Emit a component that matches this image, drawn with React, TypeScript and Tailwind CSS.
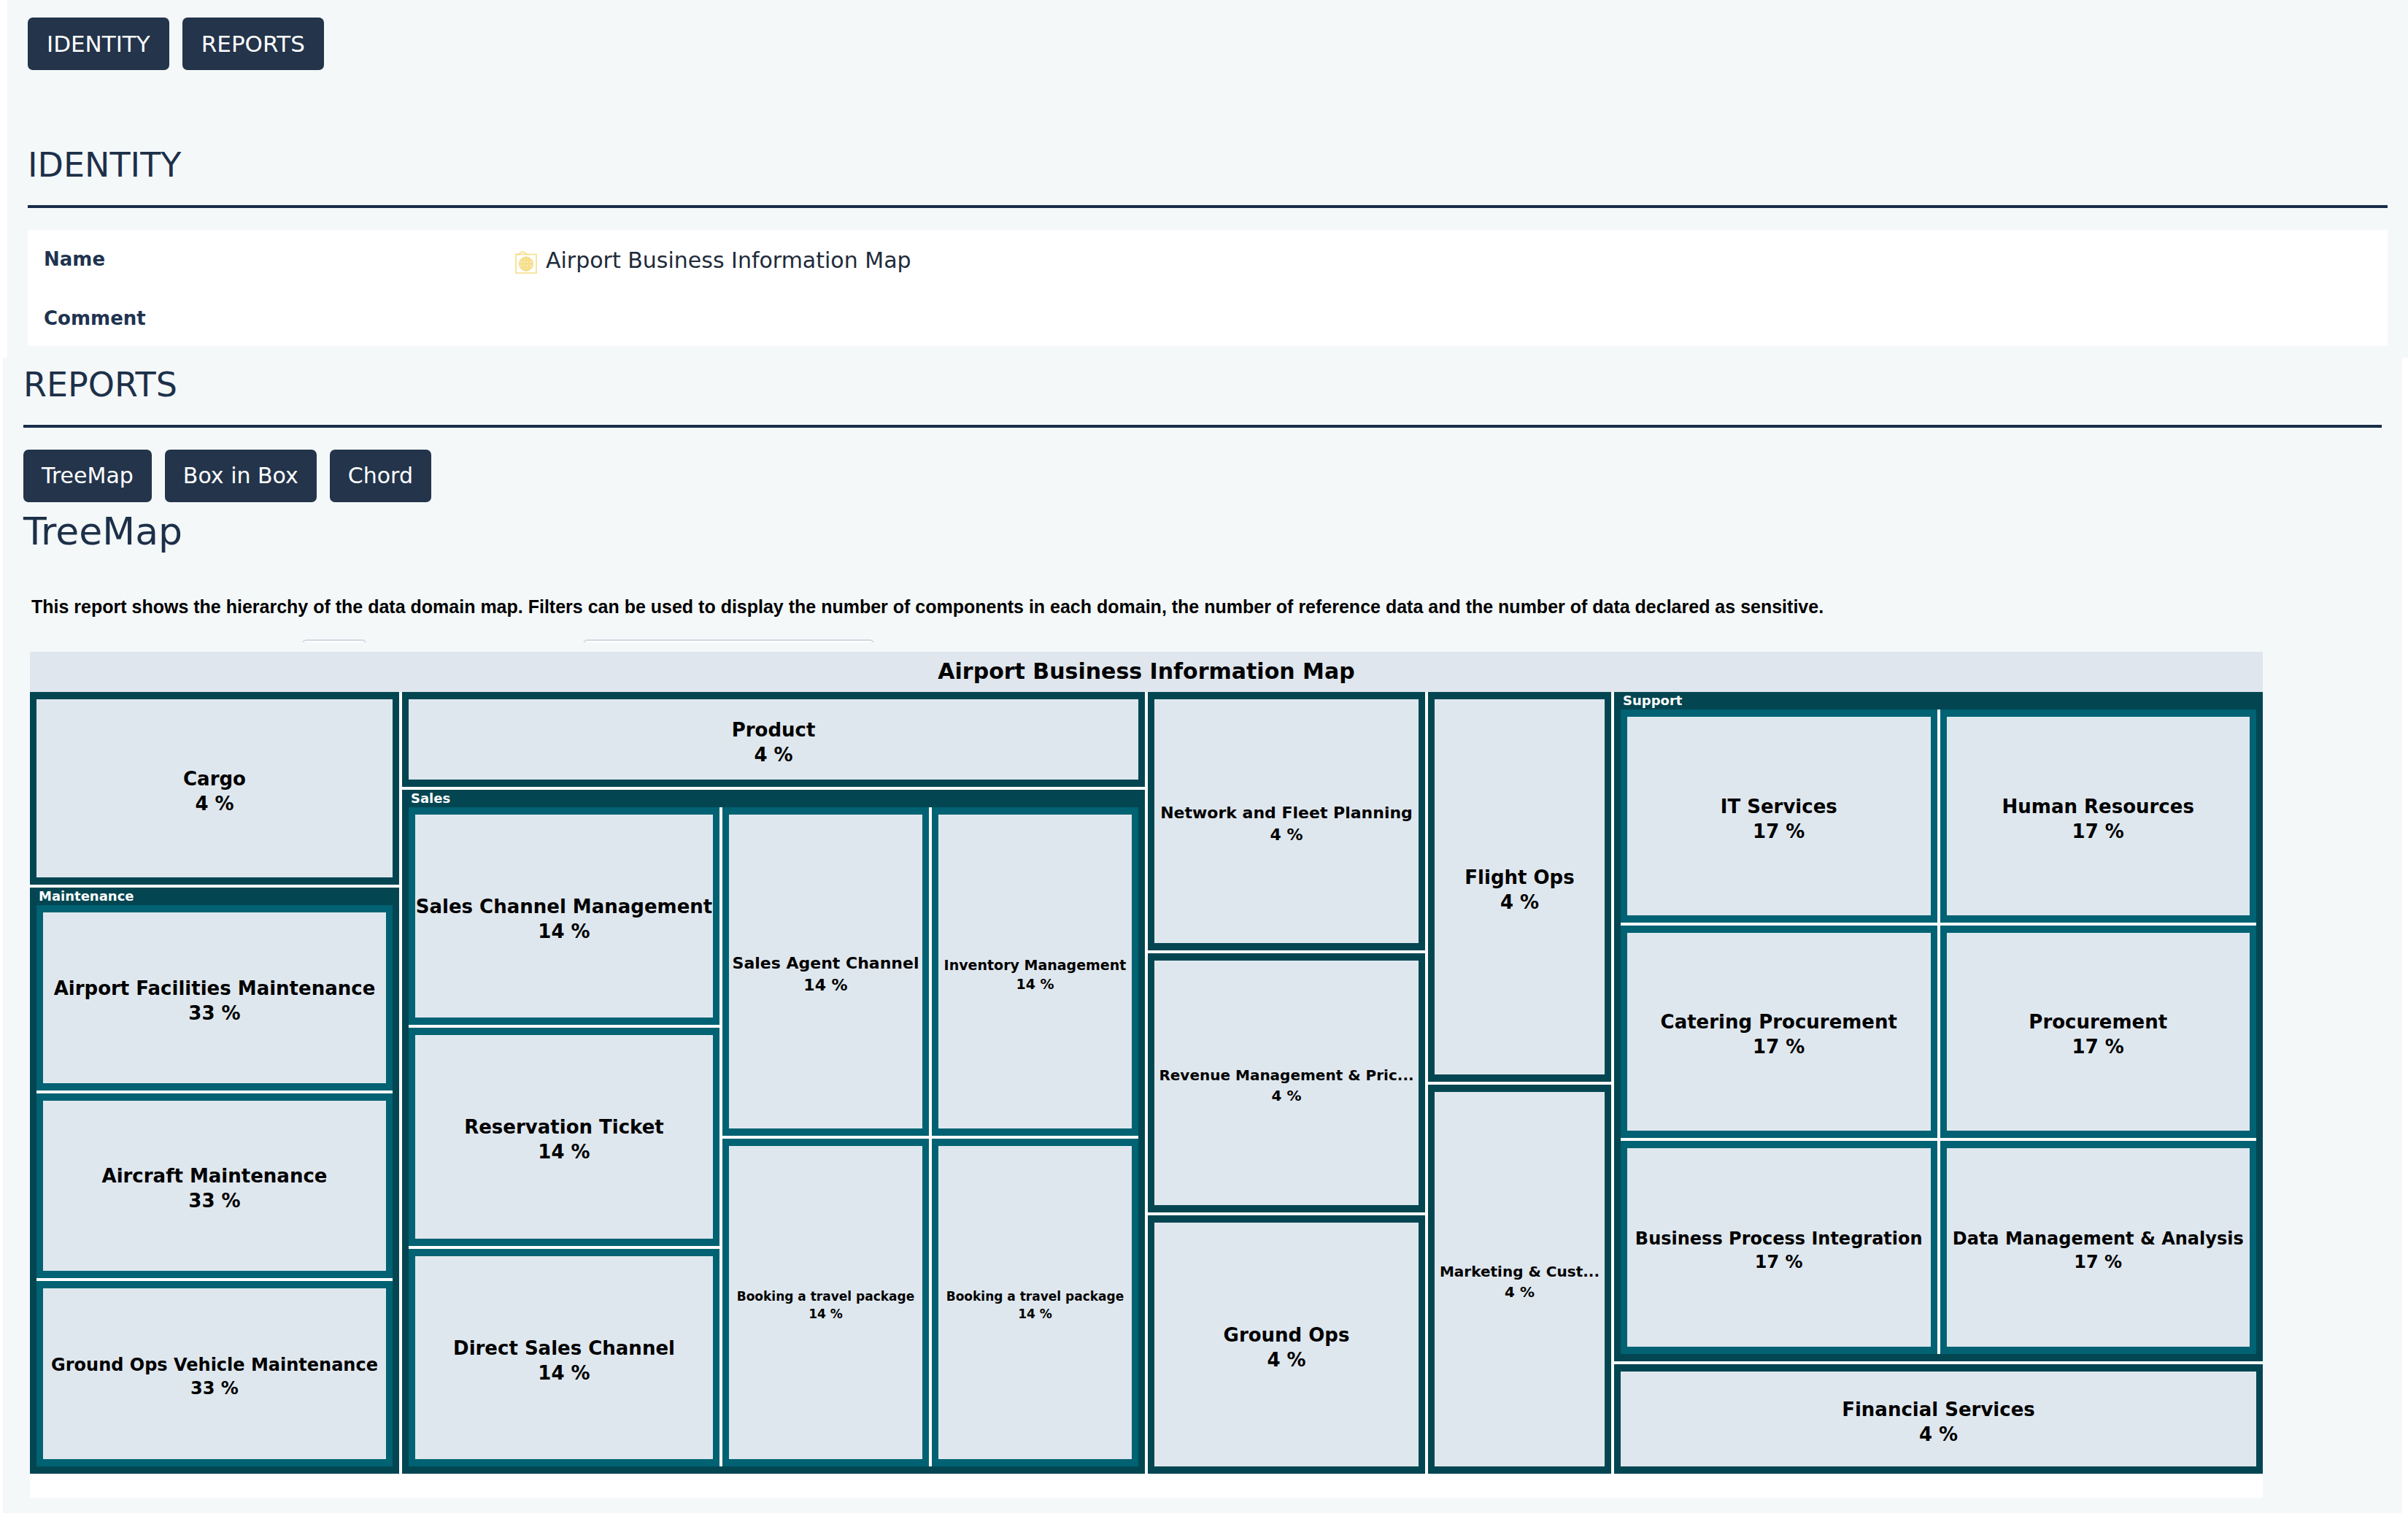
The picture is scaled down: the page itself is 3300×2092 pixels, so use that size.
import type { ReactNode } from "react";

type CellProps = { name: string; share: string; size?: "xl" | "lg" | "md" | "sm" | "xs" | "2xs"; nested?: boolean };

const textSizes = {
  xl: "text-[26px] leading-[34px]",
  lg: "text-[24px] leading-[32px]",
  md: "text-[22px] leading-[30px]",
  sm: "text-[20px] leading-[28px]",
  xs: "text-[19px] leading-[26px]",
  "2xs": "text-[17px] leading-[24px]",
};

function Cell({ name, share, size = "xl", nested = false }: CellProps) {
  return (
    <div
      className={`flex min-h-0 min-w-0 flex-col items-center justify-center border-x-[9px] border-y-[10px] bg-[#dfe7ee] pt-2 text-center font-bold whitespace-nowrap text-black ${
        nested ? "border-[#006272]" : "border-[#034652]"
      } ${textSizes[size]}`}
    >
      <span>{name}</span>
      <span>{share}</span>
    </div>
  );
}

function Group({ title, children }: { title: string; children: ReactNode }) {
  return (
    <section className="flex min-h-0 min-w-0 flex-col bg-[#034652] px-[9px] pb-[10px]">
      <h4 className="h-6 pl-[3px] text-[18px] leading-6 font-bold text-white">{title}</h4>
      {children}
    </section>
  );
}

function DataDomainMapIcon() {
  return (
    <svg viewBox="0 0 30 31" className="mt-1.5 h-[31px] w-[30px] shrink-0" fill="none" stroke="#f5dc84" strokeWidth="1.5" aria-hidden="true">
      <path d="M1 4.500H29V30H1Z" />
      <path d="M1 4.500Q5 5.500 6.500 3Q10 -1 14 3Q15.500 5.500 19 4.500" />
      <circle cx="15" cy="17.500" r="9.300" fill="#f9e9ad" />
      <ellipse cx="15" cy="17.500" rx="4.500" ry="9.300" />
      <path d="M15 8V27M6 17.500H24M7.500 12.500H22.500M7.500 22.500H22.500" />
    </svg>
  );
}

function NavButton({ children }: { children: ReactNode }) {
  return (
    <button type="button" className="h-[72px] rounded-[7px] bg-[#23344b] px-[26px] text-[31px] leading-10 text-white">
      {children}
    </button>
  );
}

function TabButton({ children }: { children: ReactNode }) {
  return (
    <button type="button" className="h-[72px] rounded-[7px] bg-[#23344b] px-[25px] text-[30px] leading-10 text-white">
      {children}
    </button>
  );
}

function SectionTitle({ children }: { children: ReactNode }) {
  return (
    <h2 className="border-b-4 border-[#1a2e49] pb-[27px] text-[46px] leading-[56px] text-[#1d3049]">{children}</h2>
  );
}

function TreeMap() {
  return (
    <div className="mt-[13px] mr-[163px] ml-[9px] bg-white pb-[33px]">
      <h3 className="bg-[#dfe6ed] pb-0.5 text-center text-[30px] leading-[53px] font-bold text-black">
        Airport Business Information Map
      </h3>
      <div className="grid h-[1071px] grid-cols-[506fr_1018fr_380fr_251fr_889fr] gap-1">
        <div className="grid min-w-0 grid-rows-[264fr_803fr] gap-1">
          <Cell name="Cargo" share="4 %" />
          <Group title="Maintenance">
            <div className="grid flex-1 grid-rows-3 gap-1 bg-white">
              <Cell nested name="Airport Facilities Maintenance" share="33 %" />
              <Cell nested name="Aircraft Maintenance" share="33 %" />
              <Cell nested name="Ground Ops Vehicle Maintenance" share="33 %" size="lg" />
            </div>
          </Group>
        </div>

        <div className="grid min-w-0 grid-rows-[130fr_937fr] gap-1">
          <Cell name="Product" share="4 %" />
          <Group title="Sales">
            <div className="grid flex-1 grid-cols-[426fr_283fr_283fr] gap-1 bg-white">
              <div className="grid min-w-0 grid-rows-3 gap-1">
                <Cell nested name="Sales Channel Management" share="14 %" />
                <Cell nested name="Reservation Ticket" share="14 %" />
                <Cell nested name="Direct Sales Channel" share="14 %" />
              </div>
              <div className="grid min-w-0 grid-rows-2 gap-1">
                <Cell nested name="Sales Agent Channel" share="14 %" size="md" />
                <Cell nested name="Booking a travel package" share="14 %" size="2xs" />
              </div>
              <div className="grid min-w-0 grid-rows-2 gap-1">
                <Cell nested name="Inventory Management" share="14 %" size="xs" />
                <Cell nested name="Booking a travel package" share="14 %" size="2xs" />
              </div>
            </div>
          </Group>
        </div>

        <div className="grid min-w-0 grid-rows-3 gap-1">
          <Cell name="Network and Fleet Planning" share="4 %" size="md" />
          <Cell name="Revenue Management &amp; Pric..." share="4 %" size="sm" />
          <Cell name="Ground Ops" share="4 %" />
        </div>

        <div className="grid min-w-0 grid-rows-2 gap-1">
          <Cell name="Flight Ops" share="4 %" />
          <Cell name="Marketing &amp; Cust..." share="4 %" size="sm" />
        </div>

        <div className="grid min-w-0 grid-rows-[917fr_150fr] gap-1">
          <Group title="Support">
            <div className="grid flex-1 grid-cols-2 grid-rows-3 gap-1 bg-white">
              <Cell nested name="IT Services" share="17 %" />
              <Cell nested name="Human Resources" share="17 %" />
              <Cell nested name="Catering Procurement" share="17 %" />
              <Cell nested name="Procurement" share="17 %" />
              <Cell nested name="Business Process Integration" share="17 %" size="lg" />
              <Cell nested name="Data Management &amp; Analysis" share="17 %" size="lg" />
            </div>
          </Group>
          <Cell name="Financial Services" share="4 %" />
        </div>
      </div>
    </div>
  );
}

export default function App() {
  return (
    <main className="min-h-screen bg-white font-['DejaVu_Sans',sans-serif]">
      <section className="ml-[10px] bg-[#f4f8f9] px-7 pt-6 pb-4">
        <nav className="mb-[102px] flex gap-[18px]">
          <NavButton>IDENTITY</NavButton>
          <NavButton>REPORTS</NavButton>
        </nav>
        <SectionTitle>IDENTITY</SectionTitle>
        <dl className="mt-[30px] bg-white px-[22px]">
          <div className="grid h-[83px] grid-cols-[20%_1fr] items-center">
            <dt className="pb-1 text-[26px] leading-9 font-bold text-[#1f3350]">Name</dt>
            <dd className="flex items-center gap-3 pl-2 text-[30px] leading-9 text-[#212b3a]">
              <DataDomainMapIcon />
              Airport Business Information Map
            </dd>
          </div>
          <div className="grid h-[76px] grid-cols-[20%_1fr] items-center">
            <dt className="text-[26px] leading-9 font-bold text-[#1f3350]">Comment</dt>
            <dd />
          </div>
        </dl>
      </section>

      <section className="mr-2 ml-1 bg-[#f4f8f9] px-7 pt-[9px] pb-[21px]">
        <SectionTitle>REPORTS</SectionTitle>
        <div className="mt-[30px] flex gap-[18px]">
          <TabButton>TreeMap</TabButton>
          <TabButton>Box in Box</TabButton>
          <TabButton>Chord</TabButton>
        </div>
        <h3 className="mt-2 text-[52px] leading-[64px] text-[#1d3049]">TreeMap</h3>
        <p className="mt-[55px] pl-[11px] font-['Liberation_Sans',sans-serif] text-[25px] leading-8 font-bold text-black">
          This report shows the hierarchy of the data domain map. Filters can be used to display the number of components in
          each domain, the number of reference data and the number of data declared as sensitive.
        </p>
        <div className="mt-[29px] flex h-1 gap-[297px] overflow-hidden pl-[382px]">
          <select aria-label="Depth" className="h-10 w-[88px] shrink-0 appearance-none rounded-md border-2 border-[#d3d8e1] bg-white" />
          <input aria-label="Filter" type="text" className="h-10 w-[399px] rounded-md border-2 border-[#d3d8e1] bg-white" />
        </div>
        <TreeMap />
      </section>
    </main>
  );
}
